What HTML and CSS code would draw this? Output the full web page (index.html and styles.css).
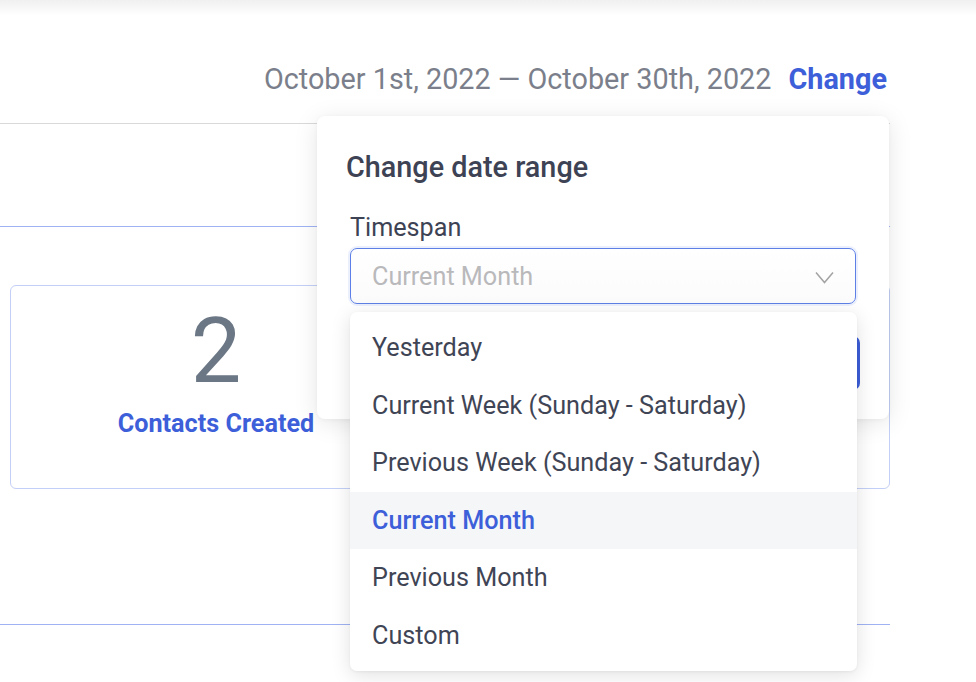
FILE: index.html
```html
<!DOCTYPE html>
<html lang="en">
<head>
<meta charset="utf-8">
<title>Report</title>
<link rel="stylesheet" href="styles.css">
</head>
<body>
<div class="header-shadow"></div>
<main class="page">
  <div class="range-row">
    <span class="range-text">October 1st, 2022 — October 30th, 2022</span>
    <a class="range-change" href="#">Change</a>
  </div>
  <hr class="rule rule-gray">
  <hr class="rule rule-blue rule-section">
  <section class="stats-card">
    <div class="stat">
      <div class="stat-value">2</div>
      <div class="stat-label">Contacts Created</div>
    </div>
    <div class="stat"></div>
  </section>
  <hr class="rule rule-blue rule-bottom">

  <div class="popover">
    <h2 class="popover-title">Change date range</h2>
    <div class="popover-body">
      <label class="field-label">Timespan</label>
      <div class="select-wrap">
        <div class="select">
          <span class="select-placeholder">Current Month</span>
          <svg class="chevron" width="19" height="13" viewBox="0 0 19 13"><path d="M1 1.5 L9.5 11.5 L18 1.5" fill="none" stroke="#a3a3a3" stroke-width="1.5"/></svg>
        </div>
        <ul class="menu">
          <li class="menu-item">Yesterday</li>
          <li class="menu-item">Current Week (Sunday - Saturday)</li>
          <li class="menu-item">Previous Week (Sunday - Saturday)</li>
          <li class="menu-item is-selected">Current Month</li>
          <li class="menu-item">Previous Month</li>
          <li class="menu-item">Custom</li>
        </ul>
      </div>
      <div class="actions">
        <button class="btn-primary">Apply</button>
      </div>
    </div>
  </div>
</main>
</body>
</html>
```

FILE: styles.css
```css
* { box-sizing: border-box; }
html, body { margin: 0; padding: 0; background: #ffffff; }
body {
  font-family: Roboto, "Liberation Sans", Arial, sans-serif;
  color: #3f4555;
  overflow: hidden;
  height: 682px;
}
.header-shadow {
  height: 16px;
  background: linear-gradient(to bottom, rgba(0,0,0,0.06), rgba(0,0,0,0));
}
.page {
  position: relative;
  display: flow-root;
  width: 890px;
}
.range-row {
  display: flex;
  justify-content: flex-end;
  align-items: center;
  gap: 17px;
  margin-top: 43px;
  padding-right: 3px;
  height: 40px;
  line-height: 40px;
  font-size: 28.8px;
}
.range-text { color: #7b7f8b; }
.range-change {
  color: #3d5fd9;
  font-weight: 700;
  text-decoration: none;
}
.rule {
  margin: 0;
  border: 0;
  height: 1px;
}
.rule-gray { background: #d9d9dc; margin-top: 24px; }
.rule-blue { background: #9fb2f2; }
.rule-section { margin-top: 102px; }
.stats-card {
  margin: 58px 0 0 10px;
  height: 204px;
  border: 1px solid #c3cff6;
  border-radius: 6px;
  display: grid;
  grid-template-columns: 410px 1fr;
}
.stat {
  text-align: center;
  padding-top: 21px;
}
.stat-value {
  font-size: 90px;
  line-height: 90px;
  color: #6b7785;
}
.stat-label {
  margin-top: 12px;
  font-size: 25.2px;
  line-height: 30px;
  font-weight: 700;
  color: #3d5fd9;
}
.rule-bottom { margin-top: 135px; }

.popover {
  position: absolute;
  top: 100px;
  left: 317px;
  width: 572px;
  height: 303px;
  background: #ffffff;
  border-radius: 8px;
  box-shadow: 0 4px 24px rgba(0,0,0,0.10), 0 1px 4px rgba(0,0,0,0.04);
  padding: 35px 33px 0 33px;
}
.popover-title {
  margin: 0 0 0 -4px;
  font-size: 28.8px;
  line-height: 32px;
  font-weight: 500;
  color: #3d4354;
}
.popover-body { margin-top: 30px; }
.field-label {
  display: block;
  font-size: 25.2px;
  line-height: 30px;
  color: #3d4354;
}
.select-wrap {
  position: relative;
  margin-top: 5px;
}
.select {
  height: 56px;
  border: 1px solid #5d80e6;
  border-radius: 7px;
  box-shadow: 0 0 0 2px rgba(93,128,230,0.12);
  background: linear-gradient(#ffffff, #fbfbfc);
  display: flex;
  align-items: center;
  justify-content: space-between;
  padding: 0 21px 0 21px;
}
.select-placeholder {
  font-size: 25.2px;
  color: #b9b9bb;
}
.chevron { display: block; margin-top: 2px; }
.menu {
  position: absolute;
  top: 64px;
  left: 0;
  width: 507px;
  margin: 0;
  padding: 7px 0;
  list-style: none;
  background: #ffffff;
  border-radius: 7px;
  box-shadow: 0 4px 20px rgba(0,0,0,0.12), 0 1px 3px rgba(0,0,0,0.05);
  z-index: 2;
}
.menu-item {
  height: 57.5px;
  line-height: 57.5px;
  padding-left: 22px;
  font-size: 25.2px;
  color: #3f4555;
}
.menu-item.is-selected {
  background: #f5f6f8;
  color: #3d5fd9;
  font-weight: 500;
}
.actions {
  display: flex;
  justify-content: flex-end;
  margin-top: 32px;
  margin-right: -4px;
}
.btn-primary {
  height: 54px;
  width: 120px;
  border: 0;
  border-radius: 7px;
  background: #3d5fd9;
  color: #ffffff;
  font-family: inherit;
  font-size: 20px;
  font-weight: 500;
}
```
